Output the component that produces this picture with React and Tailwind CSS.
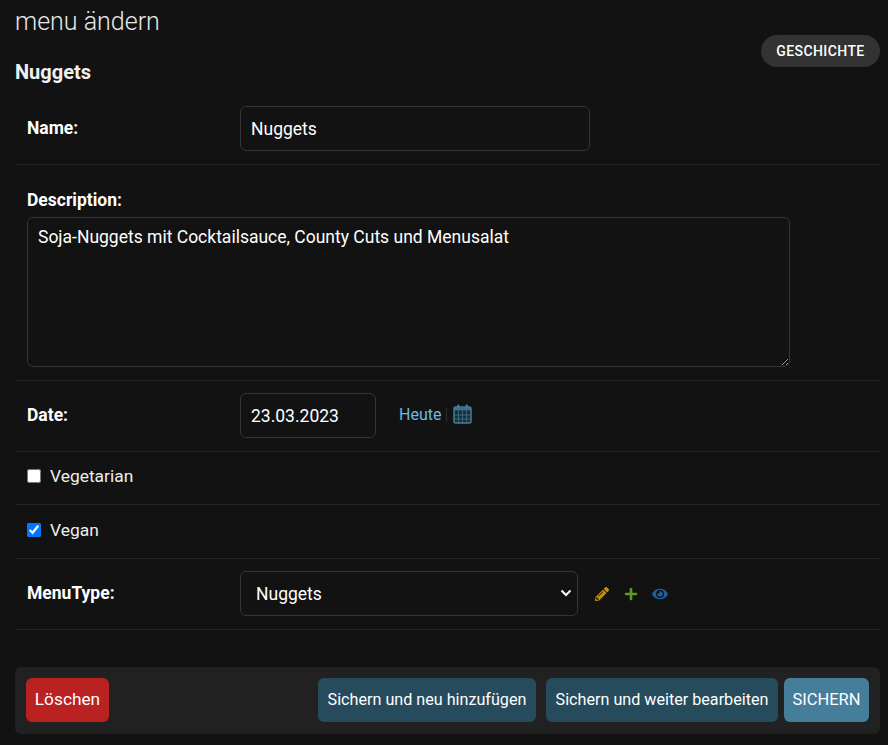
import React from "react";
import { FaPencilAlt, FaPlus, FaEye } from "react-icons/fa";

function Calendar() {
  return (
    <svg width="19" height="20" viewBox="0 0 19 20" className="text-[#447e9b]">
      <rect x="1" y="3" width="17" height="16" rx="1.5" fill="#447e9b" fillOpacity="0.25" stroke="currentColor" strokeWidth="1.5" />
      <rect x="1" y="3.5" width="17" height="3" fill="currentColor" opacity="0.85" />
      <rect x="4" y="0.5" width="2.4" height="4" rx="1" fill="currentColor" />
      <rect x="12.6" y="0.5" width="2.4" height="4" rx="1" fill="currentColor" />
      <path d="M1 11h17M1 15h17M5.5 7v12M9.5 7v12M13.5 7v12" stroke="currentColor" strokeWidth="1" fill="none" opacity="0.7" />
    </svg>
  );
}

const field = "h-[45px] bg-[#121212] border border-[#353535] rounded-md text-white text-[17.5px] px-2.5 outline-none";

export default function App() {
  return (
    <div className="min-h-[745px] bg-[#121212] text-white pl-[15px] pr-[8px] font-['Roboto',sans-serif]">
      <div className="flex justify-between items-start">
        <div>
          <h1 className="text-[25px] leading-[29px] font-light pt-[7px] text-[#e8e8e8]">menu ändern</h1>
          <h2 className="text-xl leading-[24px] font-bold text-[#f0f0f0] mt-[24px]">Nuggets</h2>
        </div>
        <button className="mt-[35px] h-8 w-[119px] rounded-full bg-[#333333] text-white text-[14px] font-medium tracking-[0.4px]">GESCHICHTE</button>
      </div>

      <div className="flex items-center pl-3 pt-[12px] pb-[13px] border-b border-[#262626] mt-[10px]">
        <label className="w-[213px] text-[17.5px] font-bold">Name:</label>
        <input className={`${field} w-[350px]`} defaultValue="Nuggets" />
      </div>

      <div className="pl-3 pt-[26px] pb-[13px] border-b border-[#262626]">
        <label className="block text-[17.5px] leading-[19px] font-bold mb-[7px]">Description:</label>
        <textarea
          className="block w-[763px] h-[150px] bg-[#121212] border border-[#353535] rounded-md text-white text-[17.5px] leading-[26px] px-2.5 py-[6px] outline-none [color-scheme:dark]"
          defaultValue="Soja-Nuggets mit Cocktailsauce, County Cuts und Menusalat"
        />
      </div>

      <div className="flex items-center pl-3 pt-[12px] pb-[13px] border-b border-[#262626]">
        <label className="w-[213px] text-[17.5px] font-bold">Date:</label>
        <input className={`${field} w-[136px]`} defaultValue="23.03.2023" />
        <a className="ml-[23px] text-base text-[#6bbbe4] -mt-0.5">Heute</a>
        <span className="ml-[5px] -mt-0.5 w-px h-[14px] bg-[#2b2b2b]" />
        <span className="ml-[6px] -mt-1"><Calendar /></span>
      </div>

      <div className="flex items-center gap-[9px] pl-3 h-[53px] border-b border-[#262626]">
        <input type="checkbox" className="w-[14px] h-[14px] m-0 -mt-1" />
        <span className="text-[17.4px] -mt-[3px] text-[#eeeeee]">Vegetarian</span>
      </div>

      <div className="flex items-center gap-[9px] pl-3 h-[54px] border-b border-[#262626]">
        <input type="checkbox" defaultChecked className="w-[14px] h-[14px] m-0 -mt-1" />
        <span className="text-[17.4px] -mt-[3px] text-[#eeeeee]">Vegan</span>
      </div>

      <div className="flex items-center pl-3 pt-[12px] pb-[13px] border-b border-[#262626]">
        <label className="w-[213px] text-[17.5px] font-bold">MenuType:</label>
        <div className="relative w-[338px]">
          <select className={`${field} w-full appearance-none pl-[15px] pt-[2px]`} defaultValue="Nuggets">
            <option>Nuggets</option>
          </select>
          <svg className="absolute right-[6px] top-[17px] pointer-events-none" width="12" height="10" viewBox="0 0 12 10" fill="none">
            <path d="M1.5 2.5 6 7l4.5-4.5" stroke="#fff" strokeWidth="2" />
          </svg>
        </div>
        <FaPencilAlt className="ml-[17px] text-[#c9920e]" size={14} />
        <FaPlus className="ml-[15px] text-[#5b9a23]" size={14} />
        <FaEye className="ml-[14px] text-[#205f9e]" size={16} />
      </div>

      <div className="mt-[37px] h-[67px] bg-[#212121] rounded-md flex items-start pt-[11px] px-[11px]">
        <button className="h-[44px] w-[83px] rounded-md bg-[#ba2121] text-white text-[17.3px]">Löschen</button>
        <button className="ml-auto h-[44px] w-[218px] rounded-md bg-[#264b5d] text-white text-[16.15px]">Sichern und neu hinzufügen</button>
        <button className="ml-[10px] h-[44px] w-[232px] rounded-md bg-[#264b5d] text-white text-[16.15px]">Sichern und weiter bearbeiten</button>
        <button className="ml-[6px] h-[44px] w-[85px] rounded-md bg-[#447e9b] text-white text-[16.5px]">SICHERN</button>
      </div>
    </div>
  );
}
